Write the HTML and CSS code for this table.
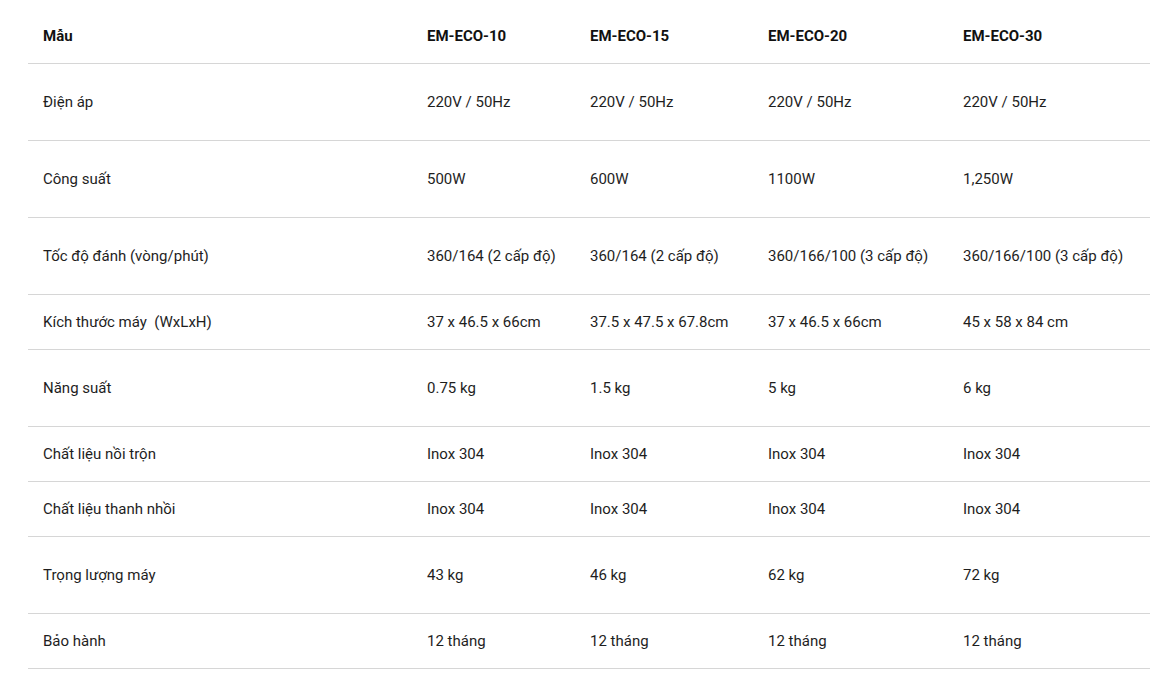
FILE: index.html
```html
<!DOCTYPE html>
<html lang="vi">
<head>
<meta charset="utf-8">
<link rel="stylesheet" href="styles.css">
</head>
<body>
<div class="wrap">
<table class="spec">
<colgroup>
<col class="c0"><col class="c1"><col class="c2"><col class="c3"><col class="c4">
</colgroup>
<thead>
<tr class="head"><th>Mẫu</th><th>EM-ECO-10</th><th>EM-ECO-15</th><th>EM-ECO-20</th><th>EM-ECO-30</th></tr>
</thead>
<tbody>
<tr class="tall"><td>Điện áp</td><td>220V / 50Hz</td><td>220V / 50Hz</td><td>220V / 50Hz</td><td>220V / 50Hz</td></tr>
<tr class="tall"><td>Công suất</td><td>500W</td><td>600W</td><td>1100W</td><td>1,250W</td></tr>
<tr class="tall"><td>Tốc độ đánh (vòng/phút)</td><td>360/164 (2 cấp độ)</td><td>360/164 (2 cấp độ)</td><td>360/166/100 (3 cấp độ)</td><td>360/166/100 (3 cấp độ)</td></tr>
<tr class="short"><td>Kích thước máy&nbsp; (WxLxH)</td><td>37 x 46.5 x 66cm</td><td>37.5 x 47.5 x 67.8cm</td><td>37 x 46.5 x 66cm</td><td>45 x 58 x 84 cm</td></tr>
<tr class="tall"><td>Năng suất</td><td>0.75 kg</td><td>1.5 kg</td><td>5 kg</td><td>6 kg</td></tr>
<tr class="short"><td>Chất liệu nồi trộn</td><td>Inox 304</td><td>Inox 304</td><td>Inox 304</td><td>Inox 304</td></tr>
<tr class="short"><td>Chất liệu thanh nhồi</td><td>Inox 304</td><td>Inox 304</td><td>Inox 304</td><td>Inox 304</td></tr>
<tr class="tall"><td>Trọng lượng máy</td><td>43 kg</td><td>46 kg</td><td>62 kg</td><td>72 kg</td></tr>
<tr class="short"><td>Bảo hành</td><td>12 tháng</td><td>12 tháng</td><td>12 tháng</td><td>12 tháng</td></tr>
</tbody>
</table>
</div>
</body>
</html>
```
FILE: styles.css
```css
html, body {
  margin: 0;
  padding: 0;
  background: #fff;
}
body {
  font-family: Roboto, "Liberation Sans", Arial, sans-serif;
  font-size: 15px;
  color: #1e1e1e;
}
.wrap {
  padding-left: 28px;
}
.spec {
  width: 1122px;
  border-collapse: collapse;
  table-layout: fixed;
}
.c0 { width: 384px; }
.c1 { width: 163px; }
.c2 { width: 178px; }
.c3 { width: 195px; }
.c4 { width: 202px; }
.spec th, .spec td {
  text-align: left;
  padding: 0 0 0 15px;
  border-bottom: 1px solid #d6d6d6;
  vertical-align: middle;
  white-space: nowrap;
  line-height: 20px;
}
.spec th {
  font-weight: 700;
  color: #111;
}
.head th {
  height: 55px;
  padding-top: 8px;
}
.tall td { height: 76px; }
.short td { height: 54px; }
```
